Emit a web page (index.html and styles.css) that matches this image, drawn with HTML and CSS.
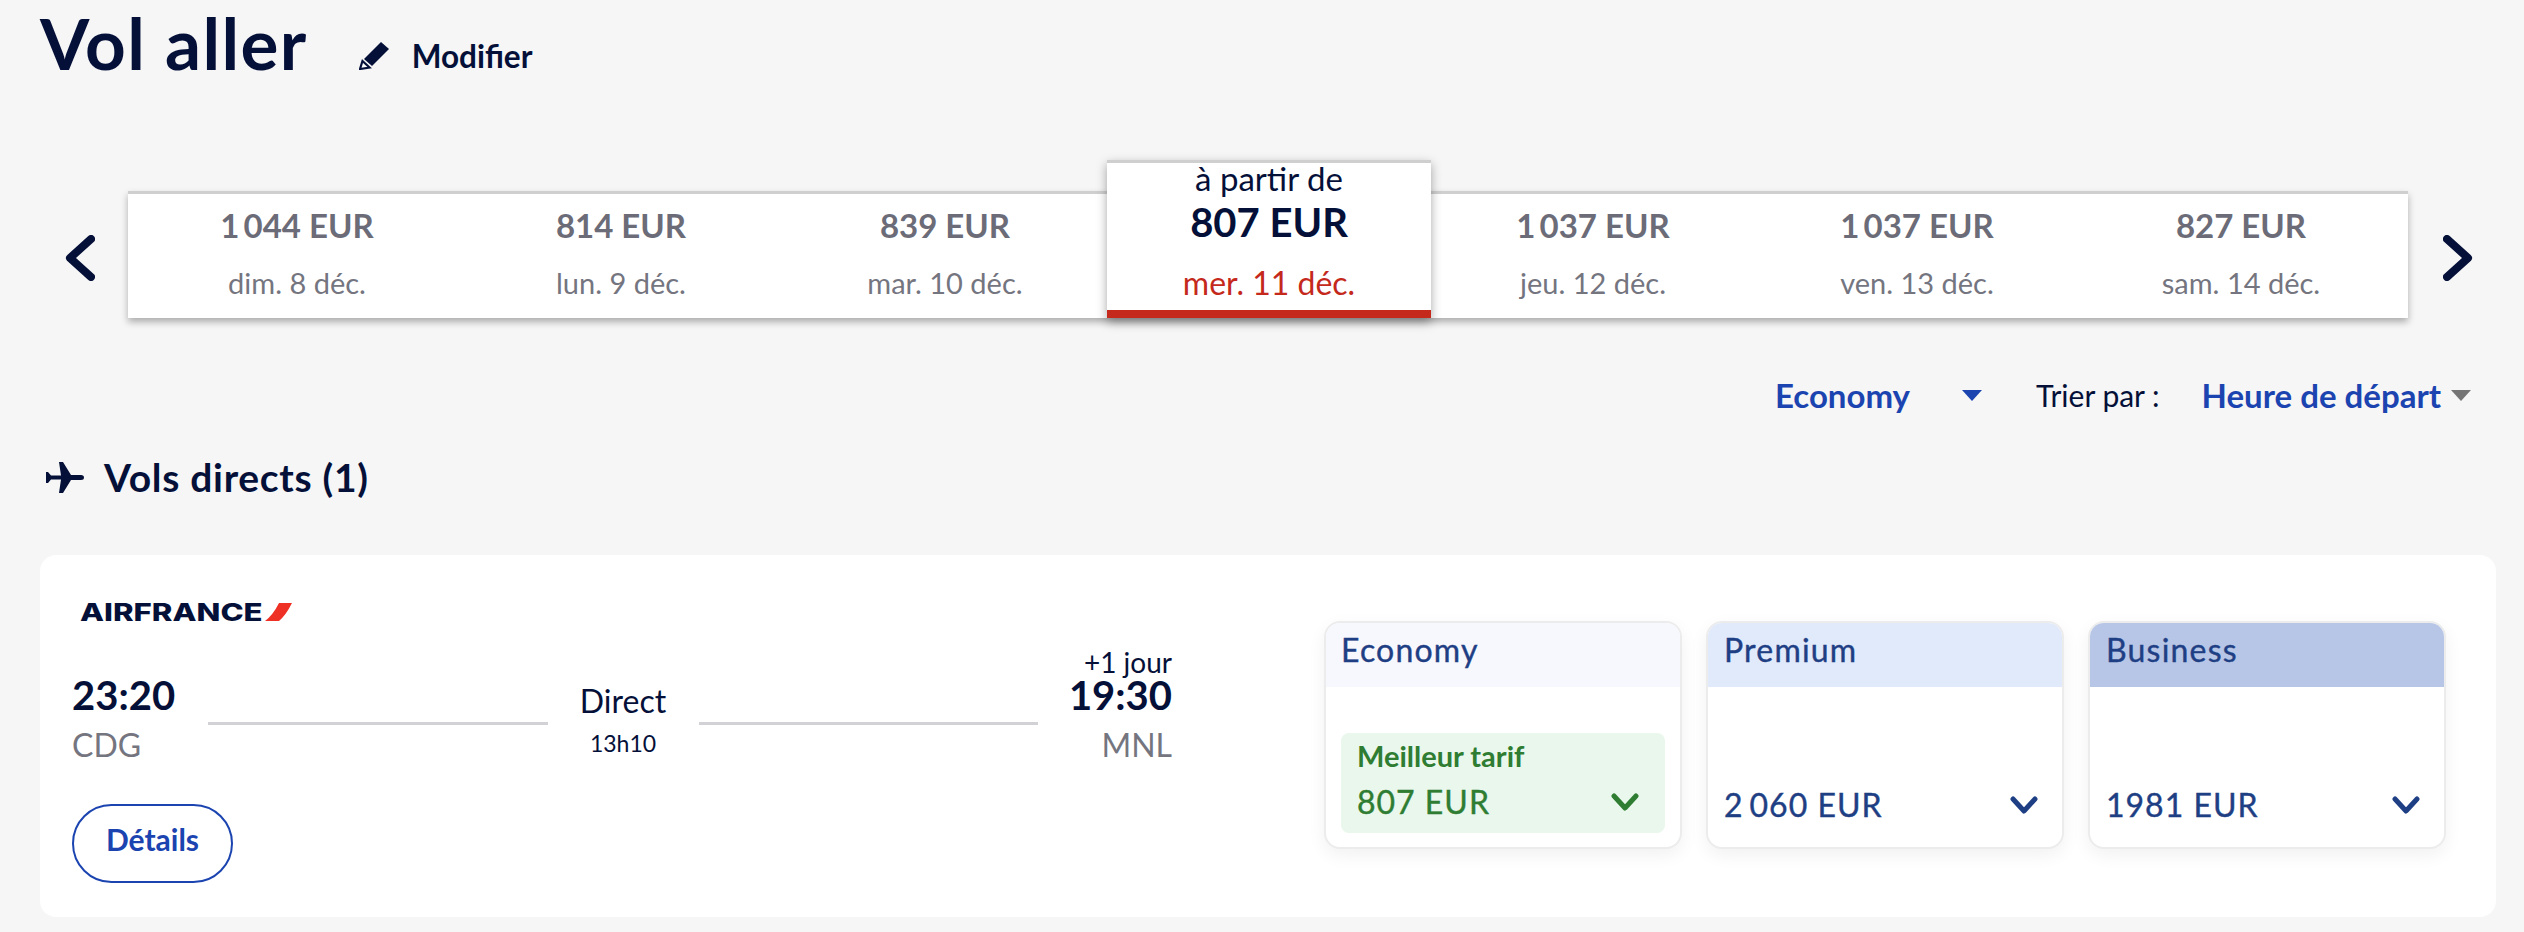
FILE: index.html
```html
<!DOCTYPE html>
<html lang="fr">
<head>
  <meta charset="UTF-8" />
  <title>Vol aller</title>
  <link rel="stylesheet" href="styles.css">
</head>
<body>

<header class="title-row">
  <h1>Vol aller</h1>
  <a class="edit-link">
    <svg class="pencil" width="30" height="28" viewBox="0 0 30 28">
      <path d="M22 0 L30 7 L13 24 L5 17 Z" fill="#051039"/>
      <path d="M3.5 19 L10.5 25.5 L1 27 Z" fill="#fff" stroke="#051039" stroke-width="2.2"/>
    </svg>
    Modifier
  </a>
</header>

<section class="date-row">
  <div class="nav-arrow nav-prev">
    <svg width="31" height="46" viewBox="0 0 31 46"><polyline points="27,4 6,23 27,42" class="arrow-line"/></svg>
  </div>
  <div class="date-strip">
    <div class="date-tile"><span class="price">1&#8202;&#8202;044 EUR</span><span class="date">dim. 8 déc.</span></div>
    <div class="date-tile"><span class="price">814 EUR</span><span class="date">lun. 9 déc.</span></div>
    <div class="date-tile"><span class="price">839 EUR</span><span class="date">mar. 10 déc.</span></div>
    <div class="date-tile selected">
      <span class="from">à partir de</span>
      <span class="price">807 EUR</span>
      <span class="date">mer. 11 déc.</span>
    </div>
    <div class="date-tile"><span class="price">1&#8202;&#8202;037 EUR</span><span class="date">jeu. 12 déc.</span></div>
    <div class="date-tile"><span class="price">1&#8202;&#8202;037 EUR</span><span class="date">ven. 13 déc.</span></div>
    <div class="date-tile"><span class="price">827 EUR</span><span class="date">sam. 14 déc.</span></div>
  </div>
  <div class="nav-arrow nav-next">
    <svg width="31" height="46" viewBox="0 0 31 46"><polyline points="4,4 25,23 4,42" class="arrow-line"/></svg>
  </div>
</section>

<section class="filter-row">
  <span class="select-value">Economy</span>
  <span class="caret caret-cabin"></span>
  <span class="sort-label">Trier par :</span>
  <span class="select-value">Heure de départ</span>
  <span class="caret caret-sort"></span>
</section>

<h2 class="section-title">
  <svg width="38" height="31" viewBox="0 0 38 31">
    <path d="M0 10 L2 10 L5 13.5 L15 13.5 L13 0 L17 0 L25 13 L35 13 Q38 13 38 15.5 Q38 18 35 18 L25 18 L17 31 L13 31 L15 17.5 L5 17.5 L2 21 L0 21 Z" fill="#051039"/>
  </svg>
  Vols directs (1)
</h2>

<article class="flight-card">
  <div class="flight-info">
    <div class="airline">
      <span class="airline-name">AIRFRANCE</span>
      <svg width="27" height="18" viewBox="0 0 27 18"><path d="M27 0 L14 0 Q8 12 0 18 L14 18 Q21 12 27 0 Z" fill="#ee3124"/></svg>
    </div>
    <div class="route">
      <div class="stop">
        <span class="extra-day">&nbsp;</span>
        <span class="time">23:20</span>
        <span class="airport">CDG</span>
      </div>
      <div class="route-line"></div>
      <div class="route-middle">
        <span class="route-type">Direct</span>
        <span class="route-duration">13h10</span>
      </div>
      <div class="route-line"></div>
      <div class="stop stop-arrival">
        <span class="extra-day">+1 jour</span>
        <span class="time">19:30</span>
        <span class="airport">MNL</span>
      </div>
    </div>
    <button class="details-btn">Détails</button>
  </div>

  <div class="fares">
    <div class="fare fare-economy">
      <div class="fare-head">Economy</div>
      <div class="fare-body">
        <div class="best-fare">
          <div class="best-label">Meilleur tarif</div>
          <div class="fare-price">
            807 EUR
            <svg width="28" height="18" viewBox="0 0 28 18"><polyline points="3,3 14,15 25,3" class="chevron-line"/></svg>
          </div>
        </div>
      </div>
    </div>
    <div class="fare fare-premium">
      <div class="fare-head">Premium</div>
      <div class="fare-body">
        <div class="fare-price">
          2&#8202;&#8202;060 EUR
          <svg width="28" height="18" viewBox="0 0 28 18"><polyline points="3,3 14,15 25,3" class="chevron-line"/></svg>
        </div>
      </div>
    </div>
    <div class="fare fare-business">
      <div class="fare-head">Business</div>
      <div class="fare-body">
        <div class="fare-price">
          1981 EUR
          <svg width="28" height="18" viewBox="0 0 28 18"><polyline points="3,3 14,15 25,3" class="chevron-line"/></svg>
        </div>
      </div>
    </div>
  </div>
</article>

</body>
</html>
```

FILE: styles.css
```css
:root {
  --navy: #051039;
  --grey: #6b6c78;
  --blue: #1b44b0;
  --fare-blue: #1f3f84;
  --green: #2f7d32;
  --red: #c4291c;
}

body {
  margin: 0;
  background: #f6f6f6;
  color: var(--navy);
  font-family: "Lato", "Liberation Sans", sans-serif;
  overflow: hidden;
}

.title-row {
  display: flex;
  align-items: baseline;
  height: 191px;
  padding-left: 40px;
}

h1 {
  margin: 0;
  font-size: 71px;
  line-height: 86px;
  letter-spacing: 1.4px;
  font-weight: 700;
}

.edit-link {
  display: flex;
  align-items: center;
  gap: 23px;
  margin-left: 51px;
  font-size: 31.5px;
  font-weight: 700;
}

.date-row {
  display: flex;
  height: 127px;
}

.nav-arrow {
  width: 128px;
  display: flex;
  align-items: center;
  flex: none;
  box-sizing: border-box;
  padding-top: 7px;
}

.nav-prev {
  justify-content: flex-end;
  padding-right: 33px;
}

.nav-next {
  padding-left: 35px;
}

.arrow-line {
  fill: none;
  stroke: var(--navy);
  stroke-width: 8;
  stroke-linecap: round;
  stroke-linejoin: round;
}

.date-strip {
  width: 2280px;
  box-sizing: border-box;
  display: flex;
  padding: 0 5px 0 7px;
  background: #fff;
  border-top: 3px solid #cfcfcf;
  box-shadow: 0 4px 7px rgba(0, 0, 0, 0.3);
}

.date-tile {
  width: 324px;
  display: flex;
  flex-direction: column;
  align-items: center;
  padding-top: 11px;
  color: var(--grey);
}

.date-tile .price {
  font-size: 33px;
  line-height: 40px;
  font-weight: 700;
}

.date-tile .date {
  margin-top: 20px;
  font-size: 29px;
  line-height: 36px;
  font-weight: 400;
  color: #74757f;
}

.date-tile.selected {
  height: 158px;
  box-sizing: border-box;
  margin-top: -34px;
  padding-top: 0;
  position: relative;
  background: #fff;
  border-top: 3px solid #cfcfcf;
  border-bottom: 8px solid var(--red);
  box-shadow: 0 4px 10px rgba(0, 0, 0, 0.35);
  color: var(--navy);
}

.selected .from {
  font-size: 33px;
  line-height: 30px;
  font-weight: 400;
}

.date-tile.selected .price {
  margin-top: 7px;
  font-size: 40px;
  line-height: 44px;
}

.date-tile.selected .date {
  margin-top: 21px;
  font-size: 32px;
  font-weight: 400;
  color: var(--red);
}

.filter-row {
  display: flex;
  justify-content: flex-end;
  align-items: center;
  height: 40px;
  margin-top: 57px;
  padding-right: 53px;
  font-size: 33px;
}

.select-value {
  font-weight: 700;
  color: var(--blue);
}

.caret {
  width: 0;
  height: 0;
  border-left: 10px solid transparent;
  border-right: 10px solid transparent;
  border-top: 11px solid var(--blue);
}

.caret-cabin {
  margin: 0 54px 0 52px;
}

.caret-sort {
  margin-left: 10px;
  border-top-color: #757575;
}

.sort-label {
  margin-right: 42px;
  font-size: 30px;
}

.section-title {
  display: flex;
  align-items: center;
  gap: 20px;
  height: 44px;
  margin: 40px 0 0 46px;
  font-size: 39px;
  letter-spacing: 0.7px;
  font-weight: 700;
}

.flight-card {
  display: flex;
  justify-content: space-between;
  height: 362px;
  box-sizing: border-box;
  margin: 56px 28px 0 40px;
  padding: 48px 50px 0 32px;
  background: #fff;
  border-radius: 16px;
}

.flight-info {
  width: 1100px;
}

.airline {
  display: flex;
  align-items: center;
  gap: 4px;
  height: 18px;
  padding-left: 8px;
}

.airline-name {
  display: block;
  width: 181px;
  font-family: "Inter", sans-serif;
  font-size: 24px;
  font-weight: 800;
  white-space: nowrap;
  transform: scaleX(1.3);
  transform-origin: left center;
}

.route {
  display: flex;
  align-items: flex-start;
  margin-top: 26px;
}

.stop {
  display: flex;
  flex-direction: column;
  width: 102px;
}

.stop-arrival {
  align-items: flex-end;
}

.extra-day {
  font-size: 28px;
  line-height: 30px;
  font-weight: 400;
}

.time {
  font-size: 40px;
  line-height: 36px;
  font-weight: 700;
}

.airport {
  margin-top: 13px;
  font-size: 32px;
  line-height: 38px;
  font-weight: 400;
  color: #74757f;
}

.route-line {
  flex: 1;
  height: 3px;
  margin-top: 75px;
  background: #d2d2d6;
}

.route-line:nth-child(2) {
  margin-left: 34px;
}

.route-line:nth-child(4) {
  margin-right: 32px;
}

.route-middle {
  display: flex;
  flex-direction: column;
  align-items: center;
  width: 151px;
  padding-top: 35px;
}

.route-type {
  font-size: 32px;
  line-height: 38px;
}

.route-duration {
  margin-top: 8px;
  font-size: 23px;
  line-height: 30px;
}

.details-btn {
  display: block;
  width: 161px;
  height: 79px;
  margin-top: 40px;
  padding: 0 0 10px;
  background: #fff;
  border: 2px solid var(--blue);
  border-radius: 40px;
  color: var(--blue);
  font-family: inherit;
  font-size: 30px;
  font-weight: 700;
}

.fares {
  display: flex;
  gap: 24px;
  margin-top: 18px;
  align-self: flex-start;
}

.fare {
  width: 358px;
  height: 228px;
  box-sizing: border-box;
  display: flex;
  flex-direction: column;
  border: 2px solid #ececec;
  border-radius: 16px;
  overflow: hidden;
  background: #fff;
  box-shadow: 0 6px 18px rgba(0, 0, 0, 0.06);
  color: var(--fare-blue);
}

.fare-head {
  height: 64px;
  flex: none;
  padding: 0 16px;
  font-size: 32px;
  line-height: 54px;
  letter-spacing: 1.2px;
  -webkit-text-stroke: 0.4px currentColor;
}

.fare-economy .fare-head {
  padding: 0 15px;
  background: #f7f8fd;
}
.fare-premium .fare-head { background: #e1eafb; }
.fare-business .fare-head { background: #b7c6e6; }

.fare-body {
  flex: 1;
  display: flex;
  flex-direction: column;
  justify-content: flex-end;
  padding: 0 16px 22px;
}

.fare-price {
  display: flex;
  justify-content: space-between;
  align-items: center;
  font-size: 32px;
  line-height: 40px;
  letter-spacing: 1px;
  padding-right: 8px;
  -webkit-text-stroke: 0.4px currentColor;
}

.fare-economy .fare-body {
  padding: 0 15px 14px;
}

.best-fare {
  height: 100px;
  box-sizing: border-box;
  padding: 6px 16px 0;
  background: #eaf7ec;
  border-radius: 8px;
  color: var(--green);
}

.best-label {
  font-size: 29px;
  line-height: 34px;
  font-weight: 700;
}

.best-fare .fare-price {
  margin-top: 9px;
  padding-right: 10px;
}

.chevron-line {
  fill: none;
  stroke: currentColor;
  stroke-width: 5;
  stroke-linecap: round;
  stroke-linejoin: round;
}
```
